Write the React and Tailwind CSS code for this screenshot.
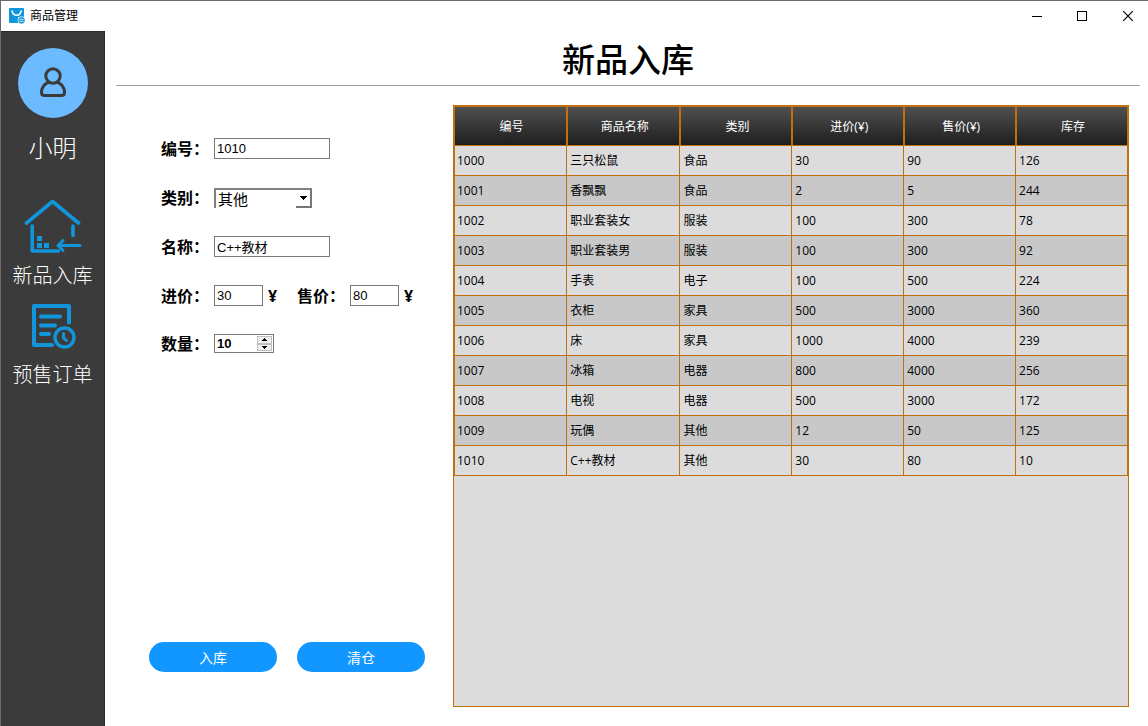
import React, { useState } from "react";

const rows = [
  ["1000", "三只松鼠", "食品", "30", "90", "126"],
  ["1001", "香飘飘", "食品", "2", "5", "244"],
  ["1002", "职业套装女", "服装", "100", "300", "78"],
  ["1003", "职业套装男", "服装", "100", "300", "92"],
  ["1004", "手表", "电子", "100", "500", "224"],
  ["1005", "衣柜", "家具", "500", "3000", "360"],
  ["1006", "床", "家具", "1000", "4000", "239"],
  ["1007", "冰箱", "电器", "800", "4000", "256"],
  ["1008", "电视", "电器", "500", "3000", "172"],
  ["1009", "玩偶", "其他", "12", "50", "125"],
  ["1010", "C++教材", "其他", "30", "80", "10"],
];
const columns = ["编号", "商品名称", "类别", "进价(¥)", "售价(¥)", "库存"];

function BagIcon() {
  return (
    <svg width="16" height="16" viewBox="0 0 16 16" aria-hidden="true">
      <path d="M1 0h13a1 1 0 0 1 1 1v8H9v6H1a1 1 0 0 1-1-1V1a1 1 0 0 1 1-1z" fill="#1296db" />
      <path d="M3 3c.6 2.800 2.400 4.200 4.700 4.200S11.600 5.800 12.200 3" fill="none" stroke="#fff" strokeWidth="1.500" strokeLinecap="round" />
      <circle cx="12.500" cy="12.300" r="3.700" fill="#1296db" stroke="#fff" strokeWidth=".7" />
      <path d="M10.300 11.300h4.400M10.300 13.300h4.400" stroke="#cfeaf8" strokeWidth=".9" />
    </svg>
  );
}

function UserIcon() {
  return (
    <svg width="30" height="34" viewBox="0 0 30 34" fill="none" stroke="#3b3b3b" strokeWidth="3" aria-hidden="true">
      <circle cx="15" cy="10" r="7.200" />
      <path d="M10.500 16.200C6 18.300 3.500 22 3.500 26.500c0 2 .9 3 3 3h17c2.100 0 3-1 3-3 0-4.500-2.500-8.200-7-10.300" />
    </svg>
  );
}

function WarehouseIcon() {
  return (
    <svg width="58" height="56" viewBox="0 0 58 56" fill="none" stroke="#1296db" strokeWidth="3.600" strokeLinecap="round" strokeLinejoin="round" aria-hidden="true">
      <path d="M2.500 25 28.500 3.500 54.500 25" />
      <path d="M8.200 28v25H34.500M49 28v9.500" />
      <path d="M56 47.500H35M39 42.500 34 47.500 39 52.500" strokeWidth="3" />
      <path d="M13 38h5v5h-5zM13 45h5v5h-5zM20 45h5v5h-5z" fill="#1296db" stroke="none" />
    </svg>
  );
}

function OrderIcon() {
  return (
    <svg width="46" height="46" viewBox="-1 0 46 46" fill="none" stroke="#1296db" strokeWidth="4" strokeLinecap="round" strokeLinejoin="round" aria-hidden="true">
      <path d="M38 19.500V3H3v39h18" />
      <path d="M10 13.500h19M10 22.500h14M10 31h8" />
      <circle cx="33.500" cy="34.500" r="9.500" strokeWidth="3.400" />
      <path d="M32.500 30.500v4.300l3 2.700" strokeWidth="3" />
    </svg>
  );
}

function TitleBar() {
  return (
    <header className="flex h-[30px] items-center bg-white pl-2 text-xs text-black">
      <BagIcon />
      <span className="ml-[5px] flex-1">商品管理</span>
      <button type="button" aria-label="最小化" className="flex h-full w-[45px] items-center justify-center">
        <svg width="10" height="10" viewBox="0 0 10 10" shapeRendering="crispEdges"><path d="M0 5h10v1H0z" /></svg>
      </button>
      <button type="button" aria-label="最大化" className="flex h-full w-[46px] items-center justify-center">
        <svg width="10" height="10" viewBox="0 0 10 10" shapeRendering="crispEdges"><path d="M.5.5h9v9h-9z" fill="none" stroke="#000" /></svg>
      </button>
      <button type="button" aria-label="关闭" className="mr-[-3px] flex h-full w-[46px] items-center justify-center">
        <svg width="10" height="10" viewBox="0 0 10 10"><path d="M0 0l10 10M10 0 0 10" stroke="#000" strokeWidth="1.200" /></svg>
      </button>
    </header>
  );
}

function Sidebar() {
  return (
    <aside className="flex w-[104px] shrink-0 flex-col items-center border-r border-t border-[#2b2b2b] bg-[#3b3b3b] pt-4 text-white">
      <div className="flex size-[70px] items-center justify-center rounded-full bg-[#6cbaff]">
        <UserIcon />
      </div>
      <div className="mt-3 text-2xl leading-9 font-light">小明</div>
      <nav className="mt-8 flex flex-col items-center gap-[11px]">
        <button type="button" className="flex flex-col items-center gap-[6px]">
          <WarehouseIcon />
          <span className="text-[20px] leading-8 font-light">新品入库</span>
        </button>
        <button type="button" className="flex flex-col items-center gap-[10px]">
          <OrderIcon />
          <span className="text-[20px] leading-8 font-light">预售订单</span>
        </button>
      </nav>
    </aside>
  );
}

const boxClass = "h-[21px] border border-[#7a7a7a] bg-white px-[2px] text-[13px] text-black outline-none";

function Label({ htmlFor, children }) {
  return (
    <label htmlFor={htmlFor} className="w-[53px] shrink-0 text-[16px] leading-5 font-bold">
      {children}
    </label>
  );
}

function StockForm() {
  const [form, setForm] = useState({ id: "1010", kind: "其他", name: "C++教材", cost: "30", price: "80", count: 10 });
  const set = (key) => (e) => setForm({ ...form, [key]: e.target.value });
  const step = (d) => () => setForm({ ...form, count: Math.max(0, Number(form.count) + d) });

  return (
    <form className="flex w-[348px] shrink-0 flex-col pl-11 pb-[35px]" onSubmit={(e) => e.preventDefault()}>
      <div className="flex flex-col gap-7 pt-[33px] pl-3">
        <div className="flex h-[21px] items-center">
          <Label htmlFor="id">编号：</Label>
          <input id="id" value={form.id} onChange={set("id")} className={`${boxClass} w-[116px]`} />
        </div>
        <div className="flex h-[21px] items-center">
          <Label htmlFor="kind">类别：</Label>
          <div className="relative flex">
            <select
              id="kind"
              value={form.kind}
              onChange={set("kind")}
              className="h-5 w-[98px] appearance-none border-t-2 border-l-2 border-[#808080] bg-white pl-[2px] text-[15px] leading-4 text-black outline-none"
            >
              <option>食品</option>
              <option>服装</option>
              <option>电子</option>
              <option>家具</option>
              <option>电器</option>
              <option>其他</option>
            </select>
            <span className="pointer-events-none absolute right-0 bottom-0 flex h-[18px] w-4 items-center justify-center border-r-2 border-b-2 border-[#767676] bg-white">
              <svg width="7" height="4" viewBox="0 0 7 4" shapeRendering="crispEdges"><path d="M0 0h7v1H6v1H5v1H4v1H3V3H2V2H1V1H0z" /></svg>
            </span>
          </div>
        </div>
        <div className="flex h-[21px] items-center">
          <Label htmlFor="name">名称：</Label>
          <input id="name" value={form.name} onChange={set("name")} className={`${boxClass} w-[116px]`} />
        </div>
        <div className="flex h-[21px] items-center">
          <Label htmlFor="cost">进价：</Label>
          <input id="cost" value={form.cost} onChange={set("cost")} className={`${boxClass} w-[49px]`} />
          <span className="w-[34px] pl-[5px] text-[16px] leading-5 font-bold">¥</span>
          <Label htmlFor="price">售价：</Label>
          <input id="price" value={form.price} onChange={set("price")} className={`${boxClass} w-[49px]`} />
          <span className="pl-[5px] text-[16px] leading-5 font-bold">¥</span>
        </div>
        <div className="flex h-[19px] items-center">
          <Label htmlFor="count">数量：</Label>
          <div className="flex h-[19px] w-[60px] border border-[#7a7a7a] bg-white p-px">
            <input
              id="count"
              type="number"
              value={form.count}
              onChange={set("count")}
              className="w-0 flex-1 appearance-none pl-px text-[13px] font-bold text-black outline-none [-moz-appearance:textfield] [&::-webkit-inner-spin-button]:appearance-none"
            />
            <div className="flex w-[15px] flex-col bg-[#f0f0f0]">
              <button type="button" aria-label="增加" onClick={step(1)} className="flex flex-1 items-center justify-center border border-[#c0c0c0]">
                <svg width="5" height="3" viewBox="0 0 5 3" shapeRendering="crispEdges"><path d="M2 0h1v1h1v1h1v1H0V2h1V1h1z" /></svg>
              </button>
              <button type="button" aria-label="减少" onClick={step(-1)} className="flex flex-1 items-center justify-center border border-[#c0c0c0]">
                <svg width="5" height="3" viewBox="0 0 5 3" shapeRendering="crispEdges"><path d="M0 0h5v1H4v1H3v1H2V2H1V1H0z" /></svg>
              </button>
            </div>
          </div>
        </div>
      </div>
      <div className="mt-auto flex gap-5 text-sm text-white">
        <button type="submit" className="h-[30px] w-32 rounded-full bg-[#1296ff] pt-px">入库</button>
        <button type="button" className="h-[30px] w-32 rounded-full bg-[#1296ff] pt-px">清仓</button>
      </div>
    </form>
  );
}

function StockTable() {
  return (
    <div className="min-w-0 flex-1 border border-[#c07010] bg-[#dcdcdc]">
      <table className="w-full table-fixed border-separate border-spacing-0 text-[12px] text-black">
        <colgroup>
          <col className="w-[16.8%]" />
          <col className="w-[16.8%]" />
          <col span={4} />
        </colgroup>
        <thead>
          <tr className="h-10 text-white">
            {columns.map((c) => (
              <th key={c} scope="col" className="border border-[#c07010] bg-linear-to-b from-[#505050] to-[#1f1f1f] p-0 pt-[2px] pl-[2px] font-normal">
                {c}
              </th>
            ))}
          </tr>
        </thead>
        <tbody>
          {rows.map((r) => (
            <tr key={r[0]} className="h-[30px] odd:bg-[#dcdcdc] even:bg-[#c8c8c8]">
              {r.map((v, i) => (
                <td key={i} className="border-r border-b border-[#c07010] p-0 pl-[3px] first:border-l first:pl-[2px]">
                  {v}
                </td>
              ))}
            </tr>
          ))}
        </tbody>
      </table>
    </div>
  );
}

export default function App() {
  return (
    <div className="flex min-h-screen flex-col overflow-x-hidden border-t border-l border-[#6b6b6b] bg-white font-['Open_Sans','Noto_Sans_CJK_SC',sans-serif] text-black">
      <TitleBar />
      <div className="flex flex-1">
        <Sidebar />
        <main className="flex min-w-0 flex-1 flex-col">
          <h1 className="mr-2 ml-[11px] flex h-[55px] items-center justify-center border-b border-[#a0a0a0] pt-1 text-[33px] leading-10 font-medium">
            新品入库
          </h1>
          <div className="flex flex-1 pt-[19px] pr-[19px] pb-[19px] [&_input]:font-['Liberation_Sans','Noto_Sans_CJK_SC',sans-serif]">
            <StockForm />
            <StockTable />
          </div>
        </main>
      </div>
    </div>
  );
}
